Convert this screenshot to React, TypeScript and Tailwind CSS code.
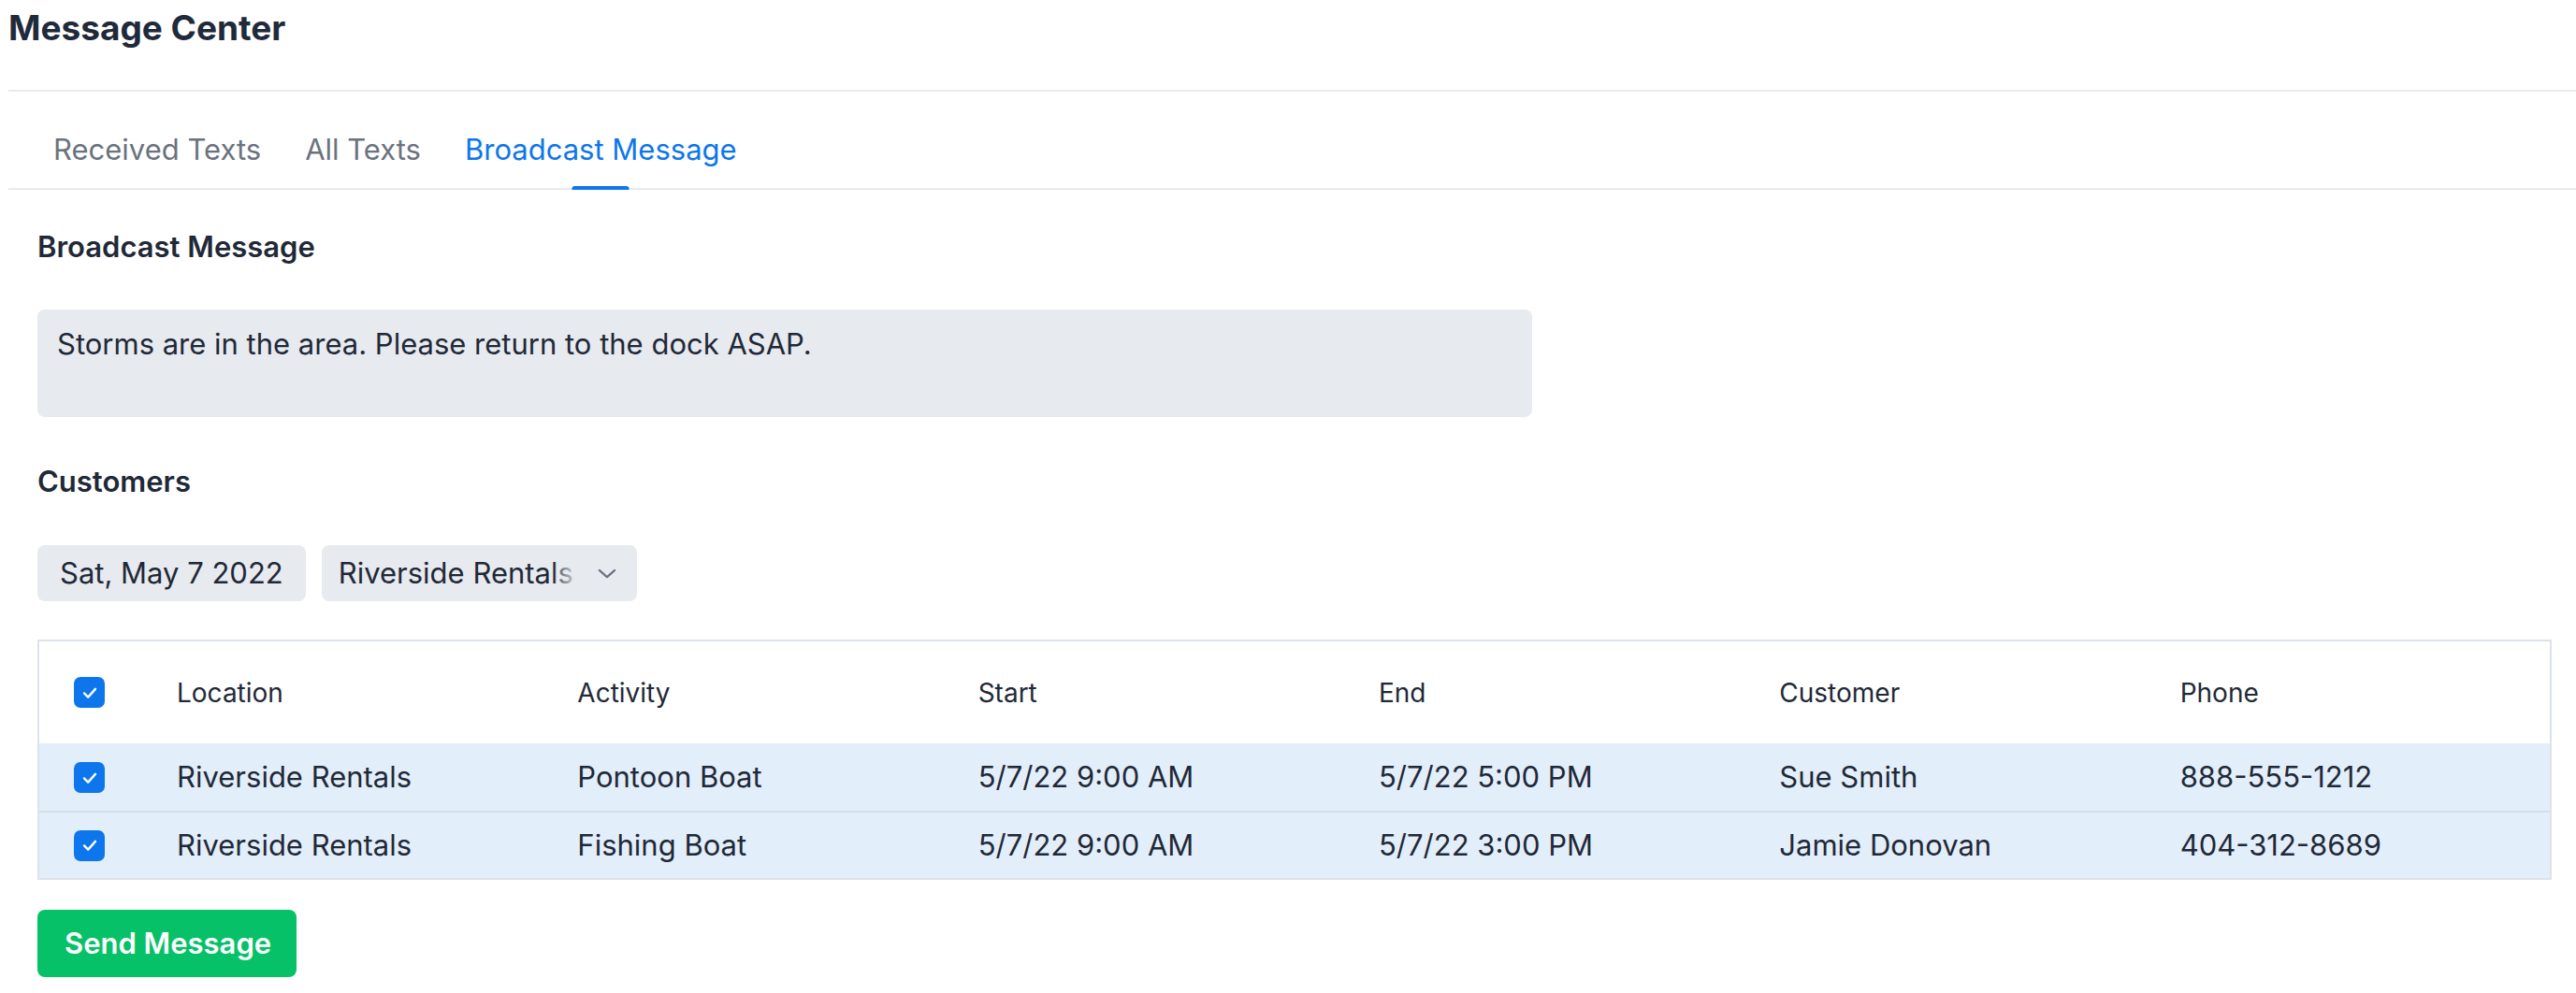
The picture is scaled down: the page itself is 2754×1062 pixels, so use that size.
import { FC } from "react";

interface Booking {
    location: string;
    activity: string;
    start: string;
    end: string;
    customer: string;
    phone: string;
}

const bookings: Booking[] = [
    {
        location: "Riverside Rentals",
        activity: "Pontoon Boat",
        start: "5/7/22 9:00 AM",
        end: "5/7/22 5:00 PM",
        customer: "Sue Smith",
        phone: "888-555-1212",
    },
    {
        location: "Riverside Rentals",
        activity: "Fishing Boat",
        start: "5/7/22 9:00 AM",
        end: "5/7/22 3:00 PM",
        customer: "Jamie Donovan",
        phone: "404-312-8689",
    },
];

const columns = ["Location", "Activity", "Start", "End", "Customer", "Phone"];

const Checkbox: FC = () => (
    <div className="flex size-[33px] items-center justify-center rounded-[7px] bg-[#0d76ec]">
        <svg viewBox="0 0 24 24" className="size-[22px]" fill="none" stroke="white" strokeWidth={2.6} strokeLinecap="round" strokeLinejoin="round">
            <path d="M5.5 12.5l4.5 4.5 8.5-9.5" />
        </svg>
    </div>
);

const Tab: FC<{ label: string; active?: boolean }> = ({ label, active }) => (
    <div className={`relative pt-[42px] pb-[21px] text-[31px] leading-[40px] ${active ? "text-[#0d76ec]" : "text-[#6b7280]"}`}>
        {label}
        {active && (
            <div className="absolute -bottom-[2px] left-1/2 h-[4px] w-[61px] -translate-x-1/2 rounded-t-[3px] bg-[#0d76ec]" />
        )}
    </div>
);

const App: FC = () => {
    return (
        <div className="min-h-screen bg-white pl-[9px] font-['Inter',sans-serif] text-[#1f2937]">
            <div className="h-[98px] border-b-2 border-[#e8eaee] pt-[8px]">
                <h1 className="text-[37px] leading-[44px] font-bold text-[#1f2a3b]">Message Center</h1>
            </div>

            <div className="flex gap-[47px] border-b-2 border-[#e8eaee] pl-[48px]">
                <Tab label="Received Texts" />
                <Tab label="All Texts" />
                <Tab label="Broadcast Message" active />
            </div>

            <div className="pr-[26px] pl-[31px]">
                <h2 className="mt-[43px] text-[31px] leading-[36px] font-semibold">Broadcast Message</h2>
                <textarea
                    className="mt-[49px] block h-[115px] w-[1598px] resize-none rounded-[8px] bg-[#e7eaef] px-[21px] pt-[19px] text-[31px] leading-[36px] text-[#1f2937] outline-none"
                    defaultValue="Storms are in the area. Please return to the dock ASAP."
                />

                <h2 className="mt-[51px] text-[31px] leading-[36px] font-semibold">Customers</h2>

                <div className="mt-[50px] flex gap-[17px]">
                    <div className="flex h-[60px] items-center rounded-[8px] bg-[#e7eaef] px-[24px] text-[31px]">
                        Sat, May 7 2022
                    </div>
                    <div className="flex h-[60px] items-center gap-[26px] rounded-[8px] bg-[#e7eaef] pr-[22px] pl-[18px] text-[31px]">
                        <span className="relative">
                            Riverside Rentals
                            <span className="absolute top-0 right-0 h-full w-[20px] bg-gradient-to-r from-[#e7eaef]/20 to-[#e7eaef]/80" />
                        </span>
                        <svg viewBox="0 0 22 12" className="h-[11px] w-[20px]" fill="none" stroke="#6b7280" strokeWidth={2.4} strokeLinecap="round" strokeLinejoin="round">
                            <path d="M2 2l9 8 9-8" />
                        </svg>
                    </div>
                </div>

                <div className="mt-[41px] border-2 border-[#dde3ea]">
                    <div className="grid h-[109px] grid-cols-[114px_repeat(6,minmax(0,1fr))] items-center text-[28px]">
                        <div className="pl-[37px]">
                            <Checkbox />
                        </div>
                        {columns.map((c) => (
                            <div key={c} className="pl-[33px]">
                                {c}
                            </div>
                        ))}
                    </div>
                    {bookings.map((b, i) => (
                        <div
                            key={i}
                            className={`grid h-[72px] grid-cols-[114px_repeat(6,minmax(0,1fr))] items-center bg-[#e3eefb] text-[31px] ${
                                i === 0 ? "border-t border-[#e6ebf1]" : "border-t-2 border-[#d5dfea]"
                            }`}
                        >
                            <div className="pl-[37px]">
                                <Checkbox />
                            </div>
                            <div className="pl-[33px]">{b.location}</div>
                            <div className="pl-[33px]">{b.activity}</div>
                            <div className="pl-[33px]">{b.start}</div>
                            <div className="pl-[33px]">{b.end}</div>
                            <div className="pl-[33px]">{b.customer}</div>
                            <div className="pl-[33px]">{b.phone}</div>
                        </div>
                    ))}
                </div>

                <button className="mt-[32px] flex h-[72px] w-[277px] items-center rounded-[8px] bg-[#06c167] pl-[29px] text-[31px] font-semibold text-white">
                    Send Message
                </button>
            </div>
        </div>
    );
};

export default App;
